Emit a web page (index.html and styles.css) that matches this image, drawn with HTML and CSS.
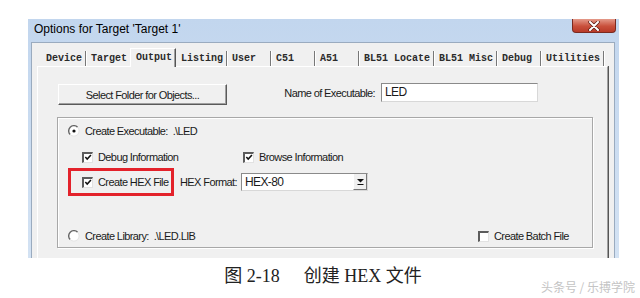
FILE: index.html
```html
<!DOCTYPE html>
<html lang="zh-CN">
<head>
    <meta charset="UTF-8">
    <meta name="viewport" content="width=device-width, initial-scale=1.0">
    <title>创建 HEX 文件</title>
    <link rel="stylesheet" href="styles.css">
</head>
<body>
    <div class="page">
        <div class="dialog">
            <div class="titlebar">
                <span class="title">Options for Target 'Target 1'</span>
                <span class="close">
                    <svg width="12" height="10" viewBox="0 0 12 10">
                        <path d="M2 1 L10 9 M10 1 L2 9" stroke="#5a1a14" stroke-width="3.4" stroke-linecap="round"/>
                        <path d="M2 1 L10 9 M10 1 L2 9" stroke="#fff" stroke-width="2" stroke-linecap="round"/>
                    </svg>
                </span>
            </div>
            <div class="client">
                <div class="tabs">
                    <span class="tab">Device</span>
                    <span class="tab before-active">Target</span>
                    <span class="tab active">Output</span>
                    <span class="tab">Listing</span>
                    <span class="tab">User</span>
                    <span class="tab">C51</span>
                    <span class="tab">A51</span>
                    <span class="tab">BL51 Locate</span>
                    <span class="tab">BL51 Misc</span>
                    <span class="tab">Debug</span>
                    <span class="tab">Utilities</span>
                </div>
                <div class="tab-page">
                    <div class="top-row">
                        <span class="btn">Select Folder for Objects...</span>
                        <span class="exe-label">Name of Executable:</span>
                        <span class="edit">LED</span>
                    </div>
                    <div class="group">
                        <div class="opt-row">
                            <span class="radio">
                                <svg width="12" height="12" viewBox="0 0 12 12">
                                    <circle cx="6" cy="6" r="5" fill="#fff"/>
                                    <path d="M2.2 9.6 A5 5 0 0 1 9.6 2.2" fill="none" stroke="#666" stroke-width="1.4"/>
                                    <path d="M9.6 2.2 A5 5 0 0 1 2.2 9.6" fill="none" stroke="#e4e4e4" stroke-width="1"/>
                                    <circle cx="6" cy="6" r="1.6" fill="#111"/>
                                </svg>
                            </span>
                            <span>Create Executable:&nbsp; .\LED</span>
                        </div>
                        <div class="opt-row check-row">
                            <span class="check-item debug-item">
                                <span class="check">
                                    <svg width="9" height="9" viewBox="0 0 9 9"><path d="M1.5 4 L3.6 6.3 L7.8 1.6" fill="none" stroke="#111" stroke-width="1.7"/></svg>
                                </span>
                                <span>Debug Information</span>
                            </span>
                            <span class="check-item">
                                <span class="check">
                                    <svg width="9" height="9" viewBox="0 0 9 9"><path d="M1.5 4 L3.6 6.3 L7.8 1.6" fill="none" stroke="#111" stroke-width="1.7"/></svg>
                                </span>
                                <span>Browse Information</span>
                            </span>
                        </div>
                        <div class="opt-row hex-row">
                            <span class="highlight">
                                <span class="check">
                                    <svg width="9" height="9" viewBox="0 0 9 9"><path d="M1.5 4 L3.6 6.3 L7.8 1.6" fill="none" stroke="#111" stroke-width="1.7"/></svg>
                                </span>
                                <span>Create HEX File</span>
                            </span>
                            <span class="hex-label">HEX Format:</span>
                            <span class="combo">
                                <span>HEX-80</span>
                                <span class="combo-btn">
                                    <svg width="9" height="8" viewBox="0 0 9 8"><path d="M1 1 H8 L4.5 4.5 Z" fill="#111"/><path d="M1.5 6.5 H7.5" stroke="#111" stroke-width="1"/></svg>
                                </span>
                            </span>
                        </div>
                        <div class="opt-row lib-row">
                            <span class="lib-item">
                                <span class="radio">
                                    <svg width="12" height="12" viewBox="0 0 12 12">
                                        <circle cx="6" cy="6" r="5" fill="#fff"/>
                                        <path d="M2.2 9.6 A5 5 0 0 1 9.6 2.2" fill="none" stroke="#666" stroke-width="1.4"/>
                                        <path d="M9.6 2.2 A5 5 0 0 1 2.2 9.6" fill="none" stroke="#e4e4e4" stroke-width="1"/>
                                    </svg>
                                </span>
                                <span>Create Library:&nbsp; .\LED.LIB</span>
                            </span>
                            <span class="check-item">
                                <span class="check"></span>
                                <span>Create Batch File</span>
                            </span>
                        </div>
                    </div>
                </div>
            </div>
        </div>
        <p class="caption">图 2-18<span class="caption-gap"></span>创建 HEX 文件</p>
    </div>
    <span class="watermark">头条号 / 乐搏学院</span>
</body>
</html>
```

FILE: styles.css
```css
body {
    margin: 0;
    width: 640px;
    height: 298px;
    overflow: hidden;
    position: relative;
    background: #ffffff;
    font-family: "Liberation Sans", Arial, sans-serif;
    color: #1a1a1a;
}

.page {
    padding: 19px 0 0 28px;
}

/* dialog frame */

.dialog {
    width: 591px;
    height: 239px;
    display: flex;
    flex-direction: column;
    background: linear-gradient(#c2d6ee, #d3e2f3);
}

.titlebar {
    height: 23px;
    display: flex;
    align-items: flex-start;
}

.title {
    padding-left: 6px;
    line-height: 20px;
    font-size: 12px;
    color: #000;
}

.close {
    margin-left: auto;
    margin-right: 3px;
    width: 44px;
    height: 14px;
    display: flex;
    align-items: center;
    justify-content: center;
    background: linear-gradient(#e49a8a, #c9503c 55%, #b83a28);
    border: 1px solid #7a2a20;
    border-top: none;
    border-radius: 0 0 4px 4px;
    box-sizing: border-box;
}

.client {
    flex: 1;
    margin: 0 4px 0 3px;
    display: flex;
    flex-direction: column;
    background: #f0f0f0;
    border: 1px solid #9aabbf;
    border-bottom: none;
}

/* tabs */

.tabs {
    display: flex;
    align-items: flex-end;
    margin: 5px 0 0 9px;
    font-family: "Liberation Mono", "Courier New", monospace;
    font-size: 10px;
    font-weight: bold;
    color: #2a2a2a;
}

.tab {
    min-width: 44px;
    height: 15px;
    line-height: 15px;
    padding: 0 3px 0 5px;
    box-sizing: border-box;
    white-space: pre;
    border-right: 1px solid #777;
    box-shadow: 1px 0 0 #fff;
}

.tab.before-active {
    border-right: none;
    box-shadow: none;
}

.tab.active {
    position: relative;
    height: 19px;
    margin-bottom: -1px;
    padding-top: 1px;
    background: #f0f0f0;
    border-left: 1px solid #fff;
    border-top: 1px solid #fff;
    border-right: 1px solid #555;
    box-shadow: inset -1px 0 0 #a0a0a0;
}

.tab-page {
    flex: 1;
    margin-left: 5px;
    width: 571px;
    box-sizing: border-box;
    padding: 17px 0 0 20px;
    border-top: 1px solid #fff;
    border-left: 1px solid #fff;
    border-right: 1px solid #a0a0a0;
    box-shadow: 1px 0 0 #555;
    font-size: 11px;
    letter-spacing: -0.6px;
}

/* first row */

.top-row {
    display: flex;
    align-items: flex-start;
    height: 21px;
}

.btn {
    width: 169px;
    height: 21px;
    box-sizing: border-box;
    display: flex;
    align-items: center;
    justify-content: center;
    background: #f0f0f0;
    border-top: 1px solid #fff;
    border-left: 1px solid #fff;
    border-right: 1px solid #5a5a5a;
    border-bottom: 1px solid #5a5a5a;
    box-shadow: inset -1px -1px 0 #a0a0a0;
}

.exe-label {
    width: 148px;
    line-height: 18px;
    text-align: right;
}

.edit {
    margin: -1px 0 0 6px;
    width: 157px;
    height: 19px;
    box-sizing: border-box;
    padding-left: 3px;
    line-height: 17px;
    font-size: 12px;
    background: #fff;
    border: 1px solid #d8d8d8;
    border-top-color: #8a8a8a;
    border-left-color: #8a8a8a;
}

/* output group */

.group {
    margin: 12px 0 0 -1px;
    width: 536px;
    height: 131px;
    box-sizing: border-box;
    display: flex;
    flex-direction: column;
    padding: 6px 0 4px 10px;
    border: 1px solid #a8a8a8;
    box-shadow: 1px 1px 0 #fff, inset 1px 1px 0 #fff;
}

.opt-row {
    display: flex;
    align-items: center;
    height: 14px;
}

.radio {
    width: 12px;
    height: 12px;
    margin-right: 5px;
    display: flex;
}

.check-row {
    margin-top: 12px;
    padding-left: 14px;
}

.check-item {
    display: flex;
    align-items: center;
}

.debug-item {
    width: 161px;
}

.check {
    width: 11px;
    height: 11px;
    box-sizing: border-box;
    margin-right: 5px;
    display: flex;
    align-items: center;
    justify-content: center;
    background: #fff;
    border-top: 2px solid #5c5c5c;
    border-left: 2px solid #5c5c5c;
    border-right: 1px solid #e2e2e2;
    border-bottom: 1px solid #e2e2e2;
}

.hex-row {
    margin-top: 4px;
    height: 28px;
}

.highlight {
    width: 106px;
    height: 28px;
    box-sizing: border-box;
    padding-left: 11px;
    display: flex;
    align-items: center;
    border: 3px solid #e3222b;
}

.hex-label {
    width: 61px;
    margin-left: 6px;
}

.combo {
    width: 127px;
    height: 18px;
    box-sizing: border-box;
    display: flex;
    align-items: center;
    padding-left: 3px;
    font-size: 12px;
    background: #fff;
    border: 1px solid #d8d8d8;
    border-top-color: #8a8a8a;
    border-left-color: #8a8a8a;
}

.combo-btn {
    margin-left: auto;
    width: 14px;
    height: 16px;
    box-sizing: border-box;
    display: flex;
    align-items: center;
    justify-content: center;
    background: #f0f0f0;
    border-left: 1px solid #fff;
    border-right: 1px solid #777;
    border-bottom: 1px solid #777;
}

.lib-row {
    margin-top: auto;
}

.lib-item {
    width: 410px;
    display: flex;
    align-items: center;
}

/* caption under the figure */

.caption {
    margin: 8px 0 0 -22px;
    line-height: 20px;
    text-align: center;
    font-family: "Liberation Serif", "Noto Sans CJK SC", serif;
    font-size: 18px;
    color: #222;
}

.caption-gap {
    display: inline-block;
    width: 24px;
}

.watermark {
    position: absolute;
    right: 5px;
    top: 280px;
    font-family: "Noto Sans CJK SC", sans-serif;
    font-size: 12px;
    line-height: 14px;
    color: #c4c4c4;
}
```
